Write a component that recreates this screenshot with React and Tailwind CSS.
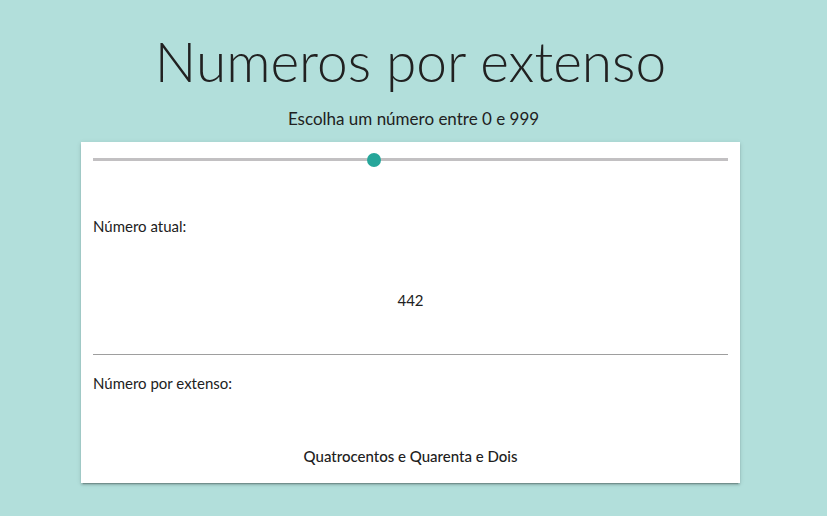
import React, { useState } from 'react';

const unidades = ['', 'Um', 'Dois', 'Três', 'Quatro', 'Cinco', 'Seis', 'Sete', 'Oito', 'Nove'];
const especiais = ['Dez', 'Onze', 'Doze', 'Treze', 'Quatorze', 'Quinze', 'Dezesseis', 'Dezessete', 'Dezoito', 'Dezenove'];
const dezenas = ['', '', 'Vinte', 'Trinta', 'Quarenta', 'Cinquenta', 'Sessenta', 'Setenta', 'Oitenta', 'Noventa'];
const centenas = ['', 'Cento', 'Duzentos', 'Trezentos', 'Quatrocentos', 'Quinhentos', 'Seiscentos', 'Setecentos', 'Oitocentos', 'Novecentos'];

const porExtenso = (n) => {
  if (n === 0) return 'Zero';
  if (n === 100) return 'Cem';
  const c = Math.floor(n / 100);
  const d = Math.floor((n % 100) / 10);
  const u = n % 10;
  const partes = [];
  if (c) partes.push(centenas[c]);
  if (d === 1) partes.push(especiais[u]);
  else {
    if (d) partes.push(dezenas[d]);
    if (u) partes.push(unidades[u]);
  }
  return partes.join(' e ');
};

const App = () => {
  const [numero] = useState(442);
  const pct = (numero / 999) * 100;

  return (
    <div className="min-h-[516px] bg-[#b2dfdb] text-[#212121] font-['Lato',sans-serif] pt-[30px] pb-[34px]">
      <h1 className="text-center text-[55px] leading-[62px] font-light -ml-[6px]">Numeros por extenso</h1>
      <p className="text-center text-[17px] leading-[20px] mt-[17px]">Escolha um número entre 0 e 999</p>

      <div className="ml-[81px] w-[659px] mt-[13px] bg-white shadow-[0_2px_2px_rgba(0,0,0,0.14),0_1px_5px_rgba(0,0,0,0.12),0_3px_1px_-2px_rgba(0,0,0,0.2)] px-[12px] pt-[16px] pb-[17px]">
        {/* slider */}
        <div className="relative h-[3px] bg-[#c2c0c2]">
          <div
            className="absolute top-1/2 w-[14px] h-[14px] -mt-[7px] -ml-[7px] rounded-full bg-[#26a69a]"
            style={{ left: `${pct}%` }}
          />
        </div>

        <div className="mt-[55px] text-[15px] leading-[20px]">Número atual:</div>
        <div className="mt-[54px] text-center text-[15px] leading-[20px]">{numero}</div>
        <hr className="mt-[44px] border-t border-[#9e9e9e]" />
        <div className="mt-[18px] text-[15px] leading-[20px]">Número por extenso:</div>
        <div className="mt-[53px] text-center text-[15px] leading-[20px] font-medium">{porExtenso(numero)}</div>
      </div>
    </div>
  );
};

export default App;
